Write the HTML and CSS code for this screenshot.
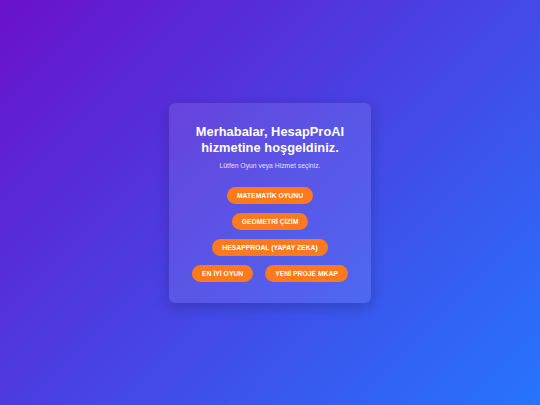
FILE: index.html
```html
<!DOCTYPE html>
<html lang="tr">
<head>
<meta charset="utf-8">
<title>HesapProAI</title>
<link rel="stylesheet" href="styles.css">
</head>
<body>
<main class="page">
  <section class="card">
    <h1 class="title">Merhabalar, HesapProAI hizmetine hoşgeldiniz.</h1>
    <p class="subtitle">Lütfen Oyun veya Hizmet seçiniz.</p>
    <div class="buttons">
      <button class="btn">MATEMATİK OYUNU</button>
      <button class="btn">GEOMETRİ ÇİZİM</button>
      <button class="btn">HESAPPROAL (YAPAY ZEKA)</button>
      <button class="btn">EN İYİ OYUN</button>
      <button class="btn">YENİ PROJE MKAP</button>
    </div>
  </section>
</main>
</body>
</html>
```
FILE: styles.css
```css
html, body {
  margin: 0;
  padding: 0;
  height: 100%;
}
body {
  font-family: "Liberation Sans", Arial, sans-serif;
  background: linear-gradient(135deg, #6a11cb 0%, #2575fc 100%);
  color: #fff;
}
.page {
  height: 100%;
  display: flex;
  align-items: center;
  justify-content: center;
}
.card {
  width: 202px;
  box-sizing: border-box;
  padding: 21px 14px 21px;
  background: rgba(255, 255, 255, 0.1);
  border-radius: 6px;
  box-shadow: 0 4px 14px rgba(0, 0, 0, 0.2);
  text-align: center;
}
.title {
  margin: 0;
  font-size: 12.8px;
  line-height: 16px;
  font-weight: bold;
  letter-spacing: 0.05px;
}
.subtitle {
  margin: 6px 0 17px;
  font-size: 6.8px;
  line-height: 8px;
  color: rgba(255, 255, 255, 0.85);
}
.buttons {
  display: flex;
  flex-wrap: wrap;
  justify-content: center;
  gap: 9px 12px;
  padding: 0 6px;
}
.btn {
  border: none;
  background: #ff7a1c;
  color: #fff;
  font-family: "Liberation Sans", Arial, sans-serif;
  font-weight: bold;
  font-size: 6.8px;
  height: 17px;
  padding: 0 10px;
  border-radius: 9px;
  cursor: pointer;
}
```
